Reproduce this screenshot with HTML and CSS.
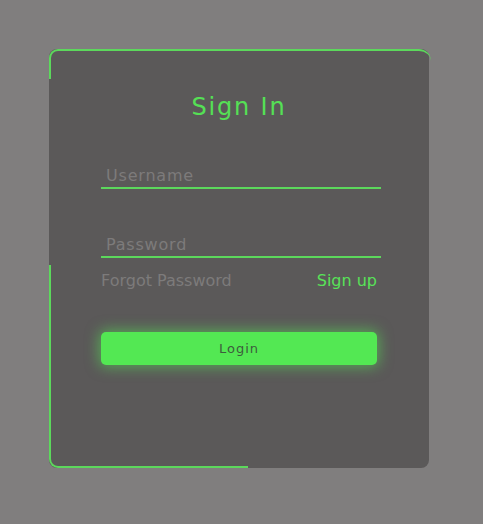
FILE: index.html
```html
<!DOCTYPE html>
<html lang="en">
<head>
<meta charset="utf-8">
<title>Sign In</title>
<link rel="stylesheet" href="styles.css">
</head>
<body>
<main class="page">
  <form class="card">
    <h1 class="title">Sign In</h1>
    <input class="field field-user" type="text" placeholder="Username">
    <input class="field field-pass" type="password" placeholder="Password">
    <div class="links">
      <a class="forgot" href="#">Forgot Password</a>
      <a class="signup" href="#">Sign up</a>
    </div>
    <button class="login" type="button">Login</button>
  </form>
</main>
</body>
</html>
```
FILE: styles.css
```css
* { box-sizing: border-box; }
html, body { margin: 0; padding: 0; }
body {
  background: #807e7e;
  font-family: "DejaVu Sans", Verdana, sans-serif;
  width: 483px;
  height: 524px;
  overflow: hidden;
}
.page {
  padding: 49px 0 0 49px;
}
.card {
  position: relative;
  width: 380px;
  height: 419px;
  background: #5b5959;
  border-radius: 8px;
  display: flex;
  flex-direction: column;
  padding: 44px 0 0 52px;
}
.card::before {
  content: "";
  position: absolute;
  left: 0;
  top: 0;
  width: 380px;
  height: 28px;
  border-top: 2px solid #5cd85c;
  border-left: 2px solid #5cd85c;
  border-radius: 9px 12px 0 0;
  pointer-events: none;
}
.card::after {
  content: "";
  position: absolute;
  left: 0;
  bottom: 0;
  width: 197px;
  height: 201px;
  border-left: 2px solid #5cd85c;
  border-bottom: 2px solid #5cd85c;
  border-radius: 0 0 0 9px;
  pointer-events: none;
}
.title {
  margin: 0;
  width: 276px;
  text-align: center;
  font-size: 24px;
  font-weight: normal;
  line-height: 29px;
  letter-spacing: 1.8px;
  color: #55e055;
}
.field {
  display: block;
  width: 280px;
  height: 31px;
  margin: 0;
  padding: 6px 5px 0;
  background: transparent;
  border: 0;
  border-bottom: 2px solid #5cd85c;
  outline: none;
  font-family: "DejaVu Sans", Verdana, sans-serif;
  font-size: 16px;
  letter-spacing: 0.8px;
  color: #dddddd;
}
.field::placeholder { color: #7d7b7b; }
.field-user { margin-top: 36px; }
.field-pass { margin-top: 38px; }
.links {
  width: 276px;
  margin-top: 13px;
  display: flex;
  justify-content: space-between;
  font-size: 16px;
  line-height: 20px;
}
.links a { text-decoration: none; }
.forgot { color: #7d7b7b; }
.signup { color: #58e258; }
.login {
  margin-top: 41px;
  width: 276px;
  height: 33px;
  border: 0;
  border-radius: 5px;
  background: #53e853;
  box-shadow: 0 0 14px 2px rgba(83, 232, 83, 0.55);
  font-family: "DejaVu Sans", Verdana, sans-serif;
  font-size: 13px;
  letter-spacing: 1px;
  color: #3d5c3d;
  padding: 0;
}
```
